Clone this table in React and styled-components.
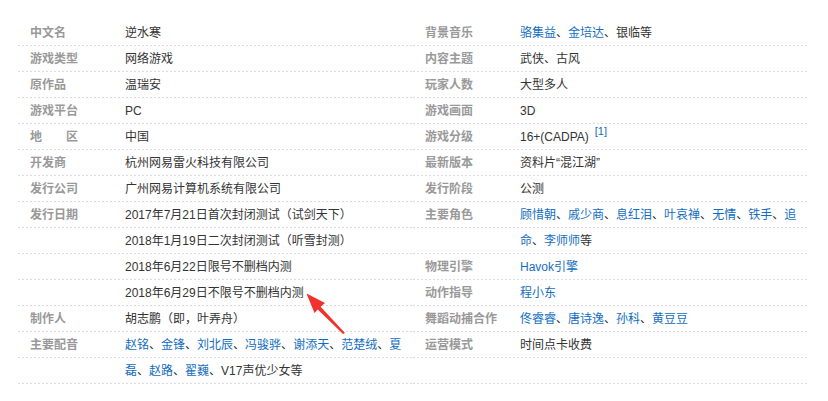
import React from "react";
import styled, { createGlobalStyle } from "styled-components";

const GlobalStyle = createGlobalStyle`
  html, body {
    margin: 0;
    padding: 0;
    background: #fff;
  }
  body {
    font-family: "Liberation Sans", "Noto Sans CJK SC", sans-serif;
    font-size: 12px;
    color: #333;
  }
`;

const left = [
  { label: "中文名", value: ["逆水寒"] },
  { label: "游戏类型", value: ["网络游戏"] },
  { label: "原作品", value: ["温瑞安"] },
  { label: "游戏平台", value: ["PC"] },
  { label: "地\u3000\u3000区", value: ["中国"] },
  { label: "开发商", value: ["杭州网易雷火科技有限公司"] },
  { label: "发行公司", value: ["广州网易计算机系统有限公司"] },
  { label: "发行日期", value: ["2017年7月21日首次封闭测试（试剑天下）"] },
  { label: "", value: ["2018年1月19日二次封闭测试（听雪封测）"] },
  { label: "", value: ["2018年6月22日限号不删档内测"] },
  { label: "", value: ["2018年6月29日不限号不删档内测"] },
  { label: "制作人", value: ["胡志鹏（即，叶弄舟）"] },
  {
    label: "主要配音",
    value: [
      { link: "赵铭" }, "、", { link: "金锋" }, "、", { link: "刘北辰" }, "、",
      { link: "冯骏骅" }, "、", { link: "谢添天" }, "、", { link: "范楚绒" }, "、",
      { link: "夏" },
    ],
  },
  {
    label: "",
    value: [{ link: "磊" }, "、", { link: "赵路" }, "、", { link: "翟巍" }, "、V17声优少女等"],
  },
];

const right = [
  { label: "背景音乐", value: [{ link: "骆集益" }, "、", { link: "金培达" }, "、银临等"] },
  { label: "内容主题", value: ["武侠、古风"] },
  { label: "玩家人数", value: ["大型多人"] },
  { label: "游戏画面", value: ["3D"] },
  { label: "游戏分级", value: ["16+(CADPA)", { sup: "[1]" }] },
  { label: "最新版本", value: ["资料片“混江湖”"] },
  { label: "发行阶段", value: ["公测"] },
  {
    label: "主要角色",
    value: [
      { link: "顾惜朝" }, "、", { link: "戚少商" }, "、", { link: "息红泪" }, "、",
      { link: "叶哀禅" }, "、", { link: "无情" }, "、", { link: "铁手" }, "、",
      { link: "追" },
    ],
  },
  { label: "", value: [{ link: "命" }, "、", { link: "李师师" }, "等"] },
  { label: "物理引擎", value: [{ link: "Havok引擎" }] },
  { label: "动作指导", value: [{ link: "程小东" }] },
  {
    label: "舞蹈动捕合作",
    value: [{ link: "佟睿睿" }, "、", { link: "唐诗逸" }, "、", { link: "孙科" }, "、", { link: "黄豆豆" }],
  },
  { label: "运营模式", value: ["时间点卡收费"] },
  { label: "", value: [] },
];

const Page = styled.div`
  position: relative;
  padding: 20px 20px 0 18px;
`;

const Info = styled.div`
  display: flex;
`;

const Block = styled.dl`
  width: 395px;
  margin: 0;
  display: flex;
  flex-direction: column;
`;

const Row = styled.div`
  display: flex;
  height: 26px;
  line-height: 26px;
  background-image: linear-gradient(to right, #dcdcdc 50%, transparent 50%);
  background-size: 4px 1px;
  background-repeat: repeat-x;
  background-position: left bottom;
`;

const Label = styled.dt`
  width: 95px;
  padding-left: 12px;
  flex: none;
  color: #999;
  font-weight: bold;
  white-space: nowrap;
`;

const Value = styled.dd`
  margin: 0;
  flex: 1;
  white-space: nowrap;
  color: #333;
`;

const Link = styled.a`
  color: #136ec2;
  text-decoration: none;
`;

const Sup = styled.sup`
  color: #136ec2;
  font-size: 11px;
  margin-left: 6px;
  vertical-align: top;
  position: relative;
  top: -6px;
`;

const Arrow = styled.svg`
  position: absolute;
  left: 296px;
  top: 286px;
`;

function renderValue(parts) {
  return parts.map((p, i) => {
    if (typeof p === "string") return <span key={i}>{p}</span>;
    if (p.link) return <Link key={i}>{p.link}</Link>;
    return <Sup key={i}>{p.sup}</Sup>;
  });
}

const InfoBlock = ({ items }) => (
  <Block>
    {items.map((item, i) => (
      <Row key={i}>
        <Label>{item.label}</Label>
        <Value>{renderValue(item.value)}</Value>
      </Row>
    ))}
  </Block>
);

export default function App() {
  return (
    <>
      <GlobalStyle />
      <Page>
        <Info>
          <InfoBlock items={left} />
          <InfoBlock items={right} />
        </Info>
        <Arrow width="56" height="54" viewBox="296 286 56 54">
          <polygon
            points="306.5,293.5 325,303 320.6,306.8 345,333 343,334 317.8,309.4 314.5,313"
            fill="#f3302b"
          />
        </Arrow>
      </Page>
    </>
  );
}
